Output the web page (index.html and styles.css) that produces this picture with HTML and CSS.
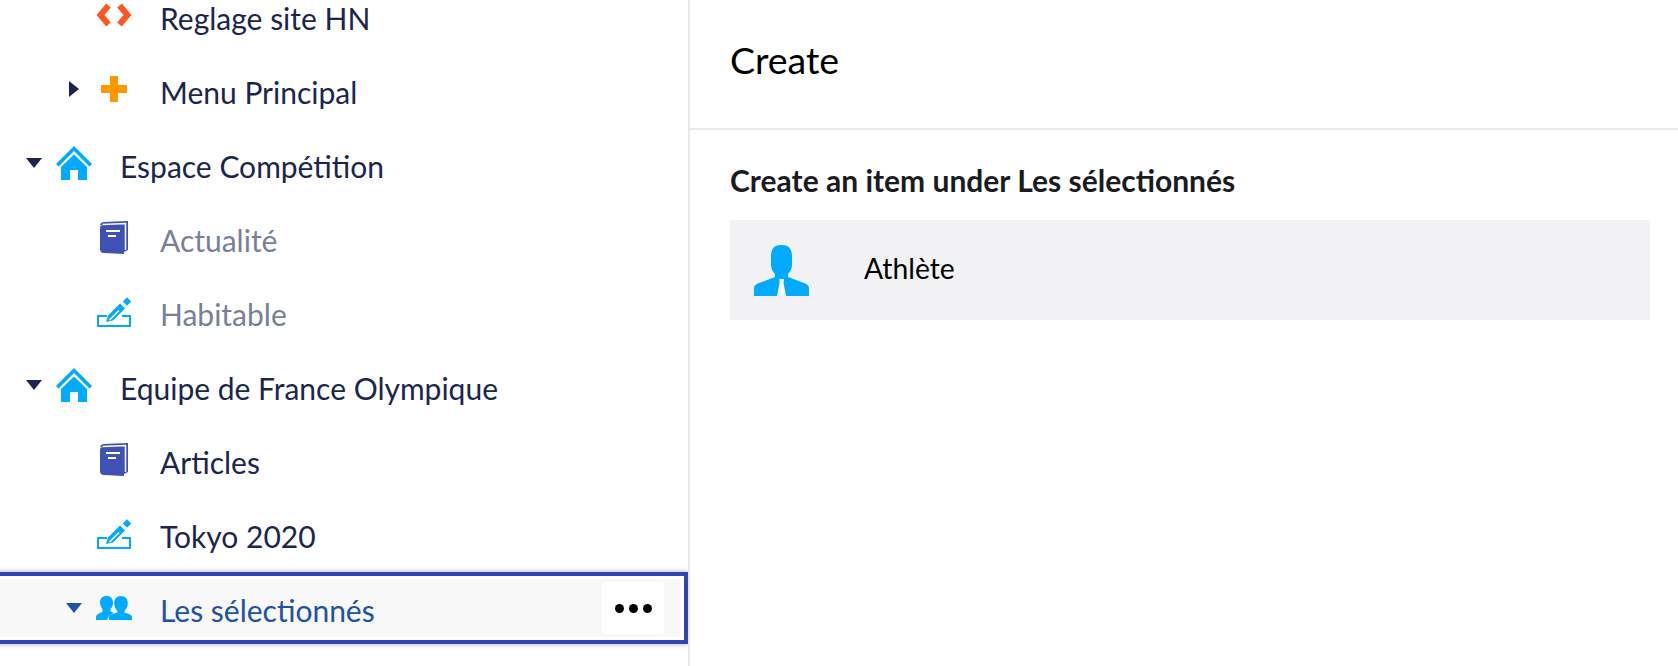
FILE: index.html
```html
<!DOCTYPE html>
<html lang="fr">
<head>
<meta charset="utf-8">
<title>Create</title>
<link rel="stylesheet" href="styles.css">
</head>
<body>
<div class="app">
  <nav class="tree">
    <div class="row depth-1">
      <span class="toggle"></span>
      <svg class="icon" viewBox="0 0 36 24"><path class="red" d="M12.500 2.500 4.500 12l8 9.500M23.500 2.500l8 9.500-8 9.500"/></svg>
      <span class="label">Reglage site HN</span>
    </div>
    <div class="row depth-1">
      <span class="toggle"><i class="tri-right"></i></span>
      <svg class="icon" viewBox="0 0 36 26"><path class="orange" d="M14 0h8v9h9v8h-9v9h-8v-9H5V9h9z"/></svg>
      <span class="label">Menu Principal</span>
    </div>
    <div class="row depth-0">
      <span class="toggle"><i class="tri-down"></i></span>
      <svg class="icon" viewBox="0 0 36 34"><use href="#home"/></svg>
      <span class="label">Espace Compétition</span>
    </div>
    <div class="row depth-1 muted">
      <span class="toggle"></span>
      <svg class="icon" viewBox="0 0 36 34"><use href="#book"/></svg>
      <span class="label">Actualité</span>
    </div>
    <div class="row depth-1 muted">
      <span class="toggle"></span>
      <svg class="icon" viewBox="0 0 36 32"><use href="#pen"/></svg>
      <span class="label">Habitable</span>
    </div>
    <div class="row depth-0">
      <span class="toggle"><i class="tri-down"></i></span>
      <svg class="icon" viewBox="0 0 36 34"><use href="#home"/></svg>
      <span class="label">Equipe de France Olympique</span>
    </div>
    <div class="row depth-1">
      <span class="toggle"></span>
      <svg class="icon" viewBox="0 0 36 34"><use href="#book"/></svg>
      <span class="label">Articles</span>
    </div>
    <div class="row depth-1">
      <span class="toggle"></span>
      <svg class="icon" viewBox="0 0 36 32"><use href="#pen"/></svg>
      <span class="label">Tokyo 2020</span>
    </div>
    <div class="row depth-1 selected">
      <span class="toggle"><i class="tri-down"></i></span>
      <svg class="icon" viewBox="0 0 36 24">
        <path class="blue" d="M6.500 13C5 11 4 8.500 4 6.500 4 2.500 6.500 0 10.500 0S17 2.500 17 6.500c0 2-.5 4.500-2.500 6.500v2.500l3 1L13 20l-2 4H0v-2.500c0-2 1-3.200 3-4l3.500-1.500z"/>
        <path class="blue" d="M21.500 15c-2-2-3.300-5-3.300-8C18.200 2.800 21 0 25 0s6.800 2.800 6.800 7c0 3-1.300 6-3.300 8v1.500l4.500 1.500c2 .7 3 2 3 3.500V24H13v-2.500c0-1.500 1-2.800 3-3.500l5.500-1.500z"/>
      </svg>
      <span class="label">Les sélectionnés</span>
      <button class="more" type="button" aria-label="Actions"><i></i><i></i><i></i></button>
    </div>
  </nav>
  <main class="panel">
    <header class="panel-head"><h1>Create</h1></header>
    <section class="panel-body">
      <h2>Create an item under Les sélectionnés</h2>
      <div class="type-card">
        <svg class="type-icon" viewBox="0 0 55 51">
          <path class="blue" d="M17 11C17 3 21 0 27.500 0S38 3 38 11V20C38 24 36 27 34 29V32L50 38Q55 40 55 43V51H0V43Q0 40 5 38L21 32V29C19 27 17 24 17 20Z"/>
          <path class="white" d="M25.500 34h4.500l-.5 4 2.500 13h-9l2.500-13z"/>
        </svg>
        <span class="type-name">Athlète</span>
      </div>
    </section>
  </main>
</div>
<svg class="defs" width="0" height="0" aria-hidden="true">
  <defs>
    <g id="home">
      <path class="blue" d="M18 0 36 18l-2.500 2.500L18 5 2.500 20.500 0 18z"/>
      <path class="blue" d="M18 8.500 31 21v13h-9V24h-8v10H5V21z"/>
    </g>
    <g id="book">
      <path class="indigo" d="M7 5Q4 5 4 8V29Q4 33 8 33L28 34V32L32 30V1L8 2Q5 2 4 5Z"/>
      <path class="page" d="M6.500 4.500 29.500 3.600V30"/>
      <path class="white" d="M10 10h14v2H10zM12 15h8v2h-8z"/>
    </g>
    <g id="pen">
      <path class="tray" d="M11 21H2v10h32V21h-8"/>
      <path class="blue" d="m10 27 2-6.500 12-12 5 5-12 12z"/>
      <path class="white" d="m13 24.500 9.500-9.500 1 1-9.500 9.500z"/>
      <path class="blue" d="M31 2.300 35.200 6.500 31 10.700 26.800 6.500z"/>
    </g>
  </defs>
</svg>
</body>
</html>
```

FILE: styles.css
```css
html, body {
  margin: 0;
  height: 666px;
  overflow: hidden;
  background: #fff;
}

body {
  font-family: Lato, "Open Sans", sans-serif;
  color: #1b264f;
}

.app {
  display: flex;
  height: 666px;
}

.defs {
  position: absolute;
}

/* Tree */
.tree {
  flex: 0 0 688px;
  border-right: 2px solid #e9e9eb;
  margin-top: -22px;
  height: 688px;
  overflow-x: hidden;
  overflow-y: visible;
}

.row {
  display: flex;
  align-items: center;
  box-sizing: border-box;
  height: 74px;
  font-size: 30px;
}

.depth-0 { padding-left: 20px; }
.depth-1 { padding-left: 60px; }

.toggle {
  flex: 0 0 28px;
  display: flex;
  justify-content: center;
  align-items: center;
}

.tri-right {
  border-left: 10px solid #1b264f;
  border-top: 8px solid transparent;
  border-bottom: 8px solid transparent;
}

.tri-down {
  border-top: 10px solid #1b264f;
  border-left: 8px solid transparent;
  border-right: 8px solid transparent;
}

.icon {
  flex: 0 0 36px;
  width: 36px;
  height: 36px;
  margin-left: 8px;
}

.label {
  margin-left: 28px;
  padding-top: 6px;
  line-height: 34px;
}

.muted .label { color: #787f9b; }

.selected {
  height: 72px;
  margin: 2px 0 0 -8px;
  padding-left: 68px;
  background: #f8f8f9;
  box-shadow: inset 0 0 0 4px #3544b1, inset 0 0 0 7px #fff, 0 0 5px rgba(53, 68, 177, 0.45);
  color: #2152a3;
}

.selected .label { padding-top: 4px; }
.selected .tri-down { border-top-color: #2152a3; }

.more {
  display: flex;
  align-items: center;
  justify-content: center;
  gap: 5px;
  width: 62px;
  height: 52px;
  margin-left: auto;
  margin-right: 24px;
  padding: 0;
  border: 0;
  border-radius: 3px;
  background: #fff;
}

.more i {
  width: 9px;
  height: 9px;
  border-radius: 50%;
  background: #000;
}

/* Icon fills */
.red { fill: none; stroke: #ff5722; stroke-width: 6; }
.orange { fill: #ff9800; }
.blue { fill: #00aaff; }
.white { fill: #fff; }
.indigo { fill: #3f51b5; }
.page { fill: none; stroke: #fff; stroke-width: 1.500; }
.tray { fill: none; stroke: #00aaff; stroke-width: 2; }

/* Right panel */
.panel {
  flex: 1;
  min-width: 0;
}

.panel-head {
  box-sizing: border-box;
  height: 130px;
  padding: 37px 0 0 40px;
  border-bottom: 2px solid #e9e9eb;
}

h1 {
  margin: 0;
  font-size: 37.500px;
  line-height: 46px;
  font-weight: 400;
  color: #000;
}

.panel-body {
  padding: 0 28px 0 40px;
}

h2 {
  margin: 0;
  padding: 31px 0 20px;
  font-size: 30px;
  line-height: 39px;
  font-weight: 700;
  color: #1b1b1f;
}

.type-card {
  display: flex;
  align-items: center;
  height: 100px;
  padding-left: 24px;
  background: #f2f2f4;
}

.type-icon {
  flex: 0 0 55px;
  width: 55px;
  height: 51px;
}

.type-name {
  margin-left: 55px;
  padding-bottom: 4px;
  font-size: 28.300px;
  color: #000;
}
```
